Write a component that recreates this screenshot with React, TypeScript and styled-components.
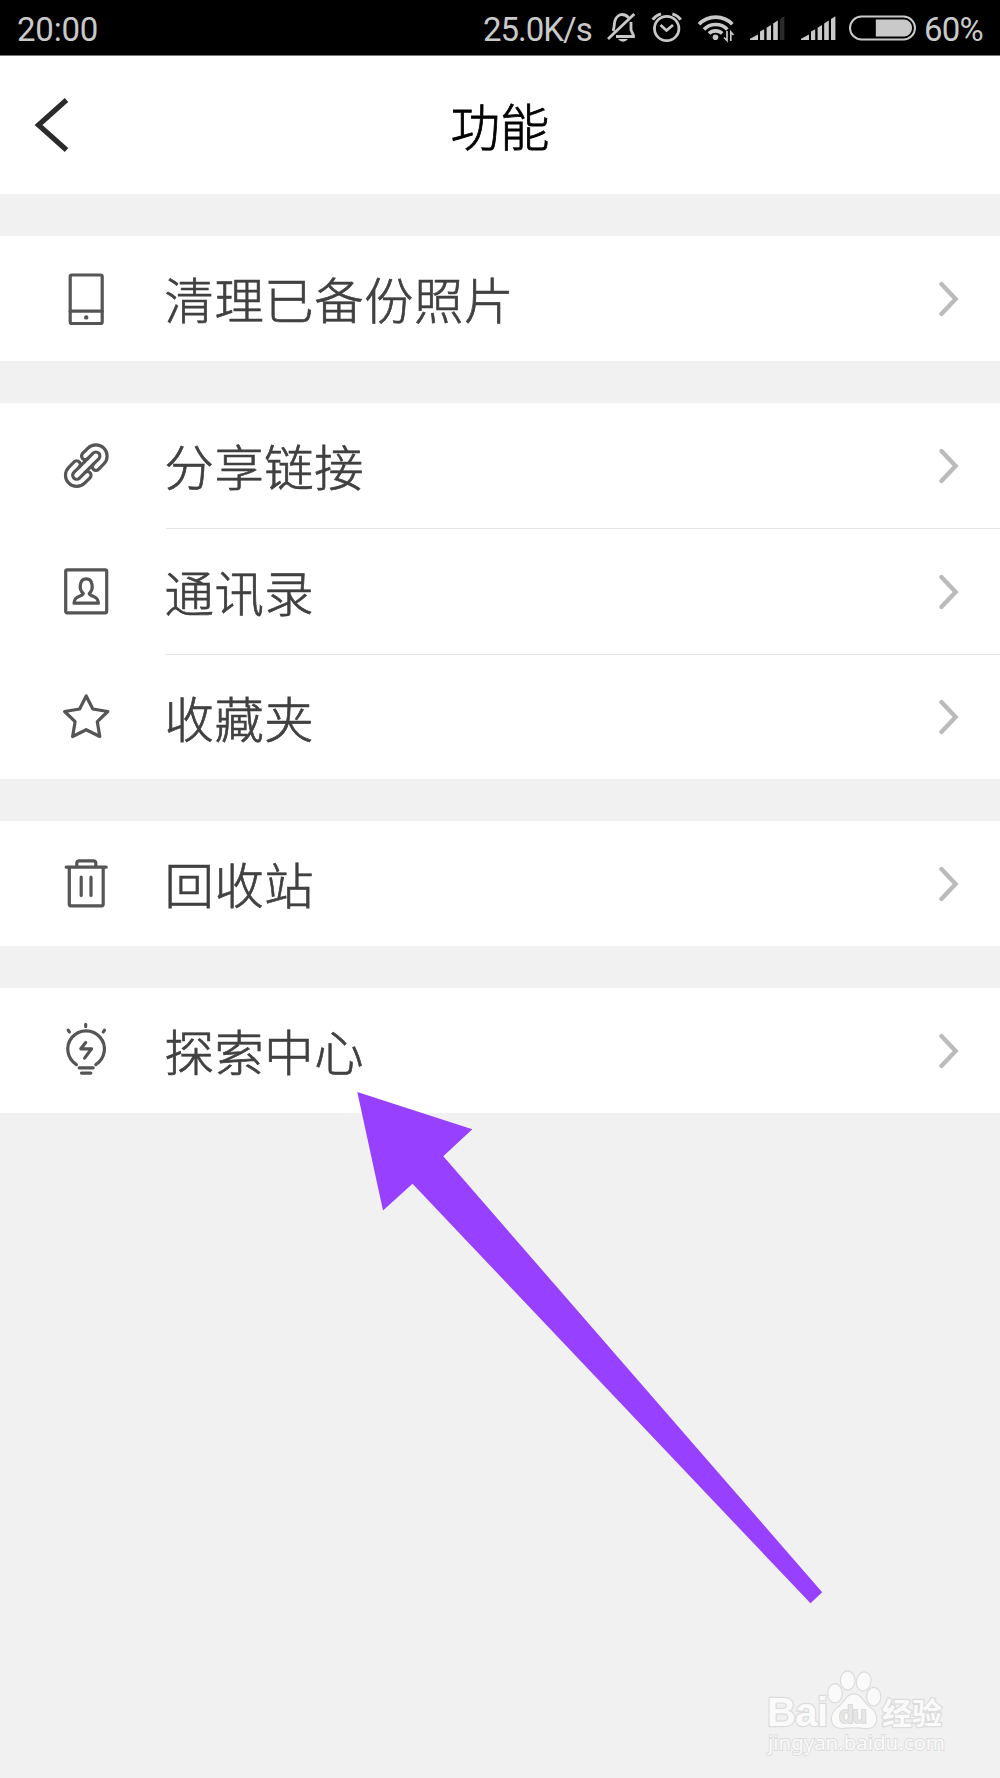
import React from 'react';
import styled, { createGlobalStyle } from 'styled-components';

const GlobalStyle = createGlobalStyle`
  * { box-sizing: border-box; }
  body {
    margin: 0;
    background: #f1f1f1;
    font-family: 'Noto Sans CJK SC', sans-serif;
  }
  svg { display: block; flex: none; }
`;

const Screen = styled.div`
  position: relative;
  width: 1000px;
  height: 1778px;
  overflow: hidden;
  background: #f1f1f1;
`;

const StatusBar = styled.div`
  display: flex;
  align-items: center;
  height: 56px;
  padding: 0 0 0 17px;
  background: #000;
  border-bottom: 1px solid #777;
  color: #c9c9c9;
  font-family: Roboto, sans-serif;
  font-size: 33px;
  line-height: 56px;
`;

const StatusText = styled.span<{ $width?: number; $spacing?: number }>`
  width: ${(p) => (p.$width ? `${p.$width}px` : 'auto')};
  letter-spacing: ${(p) => p.$spacing ?? 0}px;
  padding-top: 4px;
  white-space: nowrap;
`;

const Spacer = styled.div`
  flex: 1;
`;

const Header = styled.header`
  display: grid;
  grid-template-columns: 100px 1fr 100px;
  align-items: center;
  height: 138px;
  background: #fff;
`;

const BackButton = styled.button`
  display: flex;
  padding: 0 0 0 32px;
  border: 0;
  background: none;
`;

const Title = styled.h1`
  margin: 0;
  padding-bottom: 1px;
  color: #000;
  text-align: center;
  font-size: 49.5px;
  font-weight: 300;
  -webkit-text-stroke: 0.8px currentColor;
  line-height: 60px;
`;

const Group = styled.section`
  margin-top: 42px;
  background: #fff;
`;

const Row = styled.div`
  display: flex;
  align-items: center;
  height: 125px;
  padding: 0 39px 0 60px;

  &:last-child:not(:first-child) {
    height: 124px;
  }
`;

const Divider = styled.div`
  height: 1px;
  margin-left: 166px;
  background: #e4e4e4;
`;

const Label = styled.span`
  flex: 1;
  margin-left: 52.5px;
  padding-bottom: 1px;
  color: #404040;
  font-size: 49.3px;
  font-weight: 300;
  -webkit-text-stroke: 0.7px currentColor;
  line-height: 60px;
  letter-spacing: 0.6px;
`;

const ArrowOverlay = styled.svg`
  position: absolute;
  left: 350px;
  top: 1085px;
`;

const Watermark = styled.svg`
  position: absolute;
  left: 740px;
  top: 1650px;
`;

const IconBox = ({ children }: { children: React.ReactNode }) => (
  <svg
    width="52"
    height="60"
    viewBox="0 0 52 60"
    fill="none"
    stroke="#555"
    strokeWidth="3.2"
    strokeLinecap="round"
    strokeLinejoin="round"
  >
    {children}
  </svg>
);

const PhoneIcon = () => (
  <IconBox>
    <rect x="10.2" y="6" width="32" height="48.5" rx="1.5" />
    <path d="M10.2 42.2h32" />
    <circle cx="26.2" cy="48.4" r="2.2" fill="#555" stroke="none" />
  </IconBox>
);

const linkHalf =
  'M6 -11.2H13.6A11.2 11.2 0 0 1 13.6 11.2H6A3.6 3.6 0 0 1 6 4H13.6A4 4 0 0 0 13.6 -4H6A3.6 3.6 0 0 1 6 -11.2Z';

const LinkIcon = () => (
  <IconBox>
    <g transform="translate(26.3 29.6) rotate(-45)">
      <path d={linkHalf} />
      <path d={linkHalf} transform="rotate(180)" />
      <path d="M-6 -4H6M-6 4H6" />
    </g>
  </IconBox>
);

const ContactsIcon = () => (
  <IconBox>
    <rect x="5.7" y="7.8" width="41" height="43" rx="1.5" />
    <path d="M23.3 31.4C18.5 27.6 19.3 16.9 26.2 16.9S33.9 27.6 29.2 31.4C29.7 34.8 38.4 33 38.4 41.2H14C14 33 22.8 34.8 23.3 31.4Z" />
  </IconBox>
);

const StarIcon = () => (
  <IconBox>
    <path d="M26.2 9L32.8 22L47.8 24.5L37.3 34.7L39.8 49.5L26.2 42.7L12.6 49.5L15.1 34.7L4.6 24.5L19.6 22Z" />
  </IconBox>
);

const TrashIcon = () => (
  <IconBox>
    <path d="M6.2 13.2H46.2M16.8 13V9.3Q16.8 6.8 19.3 6.8H33.3Q35.8 6.8 35.8 9.3V13M9.3 13.2V50.3Q9.3 51.8 10.8 51.8H41.7Q43.2 51.8 43.2 50.3V13.2M21.2 23.2V41.5M31 23.2V41.5" />
  </IconBox>
);

const BulbIcon = () => (
  <IconBox>
    <path d="M16.4 43.6A18.3 18.3 0 1 1 35.8 43.6M19.2 46.8H33.2M21.5 52.1H30.8M25.7 3.4V5.6M8.2 9.1L9.4 11M44.5 9.1L43.3 11M25.7 21.6L20.8 27.8H31.6L24.6 37.1" />
  </IconBox>
);

const Chevron = () => (
  <svg width="24" height="40" viewBox="0 0 24 40" fill="none" stroke="#bbb" strokeWidth="4.4" strokeLinecap="round">
    <path d="M4.4 5L18.6 20L4.4 35" />
  </svg>
);

const BellIcon = () => (
  <svg width="44" height="55" viewBox="600 0 44 55" fill="none" stroke="#c9c9c9" strokeWidth="2.8">
    <path d="M608 39L634.3 14M613 31C614.5 28 614 24 615 20.5C616.5 16 620 14.5 622 14.5C625 14.5 627 15.8 628.5 17.5M631 22V30L633.5 35.5V36.5H616" />
    <path d="M618 39H628Q626 41.7 623 41.7T618 39Z" fill="#c9c9c9" stroke="none" />
  </svg>
);

const AlarmIcon = () => (
  <svg width="48" height="55" viewBox="644 0 48 55" fill="none" stroke="#c9c9c9" strokeWidth="2.8">
    <circle cx="666.7" cy="28.5" r="12.2" />
    <path d="M660.5 25L666.5 30.5L673 25" />
    <path d="M652.8 19.8Q655 15.8 661 13.8M680.6 19.8Q678.4 15.8 672.4 13.8" strokeWidth="3" />
  </svg>
);

const WifiIcon = () => (
  <svg width="52" height="55" viewBox="692 0 52 55" fill="none" stroke="#c9c9c9" strokeWidth="3.6">
    <path d="M699 24.3A23 23 0 0 1 732.4 24.3M704 29.4A16.5 16.5 0 0 1 727.4 29.4M709 33.6A9.3 9.3 0 0 1 722.2 33.6" />
    <circle cx="715.5" cy="37.3" r="2.8" fill="#c9c9c9" stroke="none" />
    <path d="M727 31V40.5L724 37.5M730.8 41V32L733.5 35" strokeWidth="1.7" />
  </svg>
);

const SignalIcon = ({ x, weak }: { x: number; weak?: boolean }) => (
  <svg width="50" height="55" viewBox={`${x} 0 50 55`} fill="#c9c9c9">
    <path d="M6 40V38.8L14 34.5V40Z" />
    <path d="M16 40V31.5L20.2 29.2V40Z" />
    <path d="M22.6 40V27.8L27 25V40Z" />
    <path d="M29.2 40V23.4L33.8 20.5V40Z" />
    <path d="M36 40V19L40.4 16.2V40Z" fill={weak ? '#2c2c2c' : '#c9c9c9'} />
  </svg>
);

const BatteryIcon = () => (
  <svg width="80" height="55" viewBox="844 0 80 55">
    <rect x="850" y="16.6" width="65" height="22.8" rx="11.4" fill="none" stroke="#c9c9c9" strokeWidth="2" />
    <path d="M875.8 19.5H904.5A8.5 8.5 0 0 1 904.5 36.4H875.8Z" fill="#c9c9c9" />
  </svg>
);

const groups = [
  [{ label: '清理已备份照片', Icon: PhoneIcon }],
  [
    { label: '分享链接', Icon: LinkIcon },
    { label: '通讯录', Icon: ContactsIcon },
    { label: '收藏夹', Icon: StarIcon },
  ],
  [{ label: '回收站', Icon: TrashIcon }],
  [{ label: '探索中心', Icon: BulbIcon }],
];

export default function App() {
  return (
    <Screen>
      <GlobalStyle />
      <StatusBar>
        <StatusText $spacing={-0.2}>20:00</StatusText>
        <Spacer />
        <StatusText $width={117} $spacing={-1}>25.0K/s</StatusText>
        <BellIcon />
        <AlarmIcon />
        <WifiIcon />
        <SignalIcon x={0} weak />
        <SignalIcon x={-1} />
        <BatteryIcon />
        <StatusText $width={76} $spacing={-0.8}>60%</StatusText>
      </StatusBar>
      <Header>
        <BackButton aria-label="返回">
          <svg width="40" height="60" viewBox="0 0 40 60" fill="none" stroke="#2b2b2b" strokeWidth="5.2">
            <path d="M34.5 5L6.5 30L34.5 55" />
          </svg>
        </BackButton>
        <Title>功能</Title>
      </Header>
      {groups.map((items) => (
        <Group key={items[0].label}>
          {items.map(({ label, Icon }, i) => (
            <React.Fragment key={label}>
              {i > 0 && <Divider />}
              <Row>
                <Icon />
                <Label>{label}</Label>
                <Chevron />
              </Row>
            </React.Fragment>
          ))}
        </Group>
      ))}
      <ArrowOverlay width="480" height="525" viewBox="350 1085 480 525">
        <path d="M357.3 1092L472.3 1129.3L443.3 1156.3L822.2 1592.3L810.5 1603.3L412.5 1183.8L383 1210.5Z" fill="#9740ff" />
      </ArrowOverlay>
      <Watermark width="240" height="128" viewBox="0 0 240 128" fill="#fafafa" stroke="#dcdcdc" strokeWidth="2.4" paintOrder="stroke">
        <text x="27" y="76" fontFamily="Liberation Sans, sans-serif" fontWeight="700" fontSize="40" textLength="61">Bai</text>
        <ellipse cx="95" cy="43.3" rx="6.7" ry="9" />
        <ellipse cx="107.7" cy="30.5" rx="6.7" ry="9" />
        <ellipse cx="123.7" cy="31.5" rx="6.7" ry="9" transform="rotate(10 123.7 31.5)" />
        <ellipse cx="133.7" cy="46.7" rx="6.5" ry="8.7" />
        <path d="M114 44.5C121 44.5 123 52 129 57C134 61 137 65 136 71C134 79 127 78.5 121 77.5C116 77 112 77 107 77.5C100 78.5 93 78 92 70C91.5 64 95 60 99.5 56.5C105 52 107 44.5 114 44.5Z" />
        <text x="99" y="72.5" fontFamily="Liberation Sans, sans-serif" fontWeight="700" fontSize="24" textLength="28" fill="#e6e6e6" stroke="#d4d4d4" strokeWidth="1.6">du</text>
        <text x="142" y="73.5" fontFamily="Noto Sans CJK SC, sans-serif" fontWeight="700" fontSize="30">经验</text>
        <text x="28" y="100" fontFamily="Noto Sans, sans-serif" fontSize="20.5" textLength="177" strokeWidth="1.8">jingyan.baidu.com</text>
      </Watermark>
    </Screen>
  );
}
